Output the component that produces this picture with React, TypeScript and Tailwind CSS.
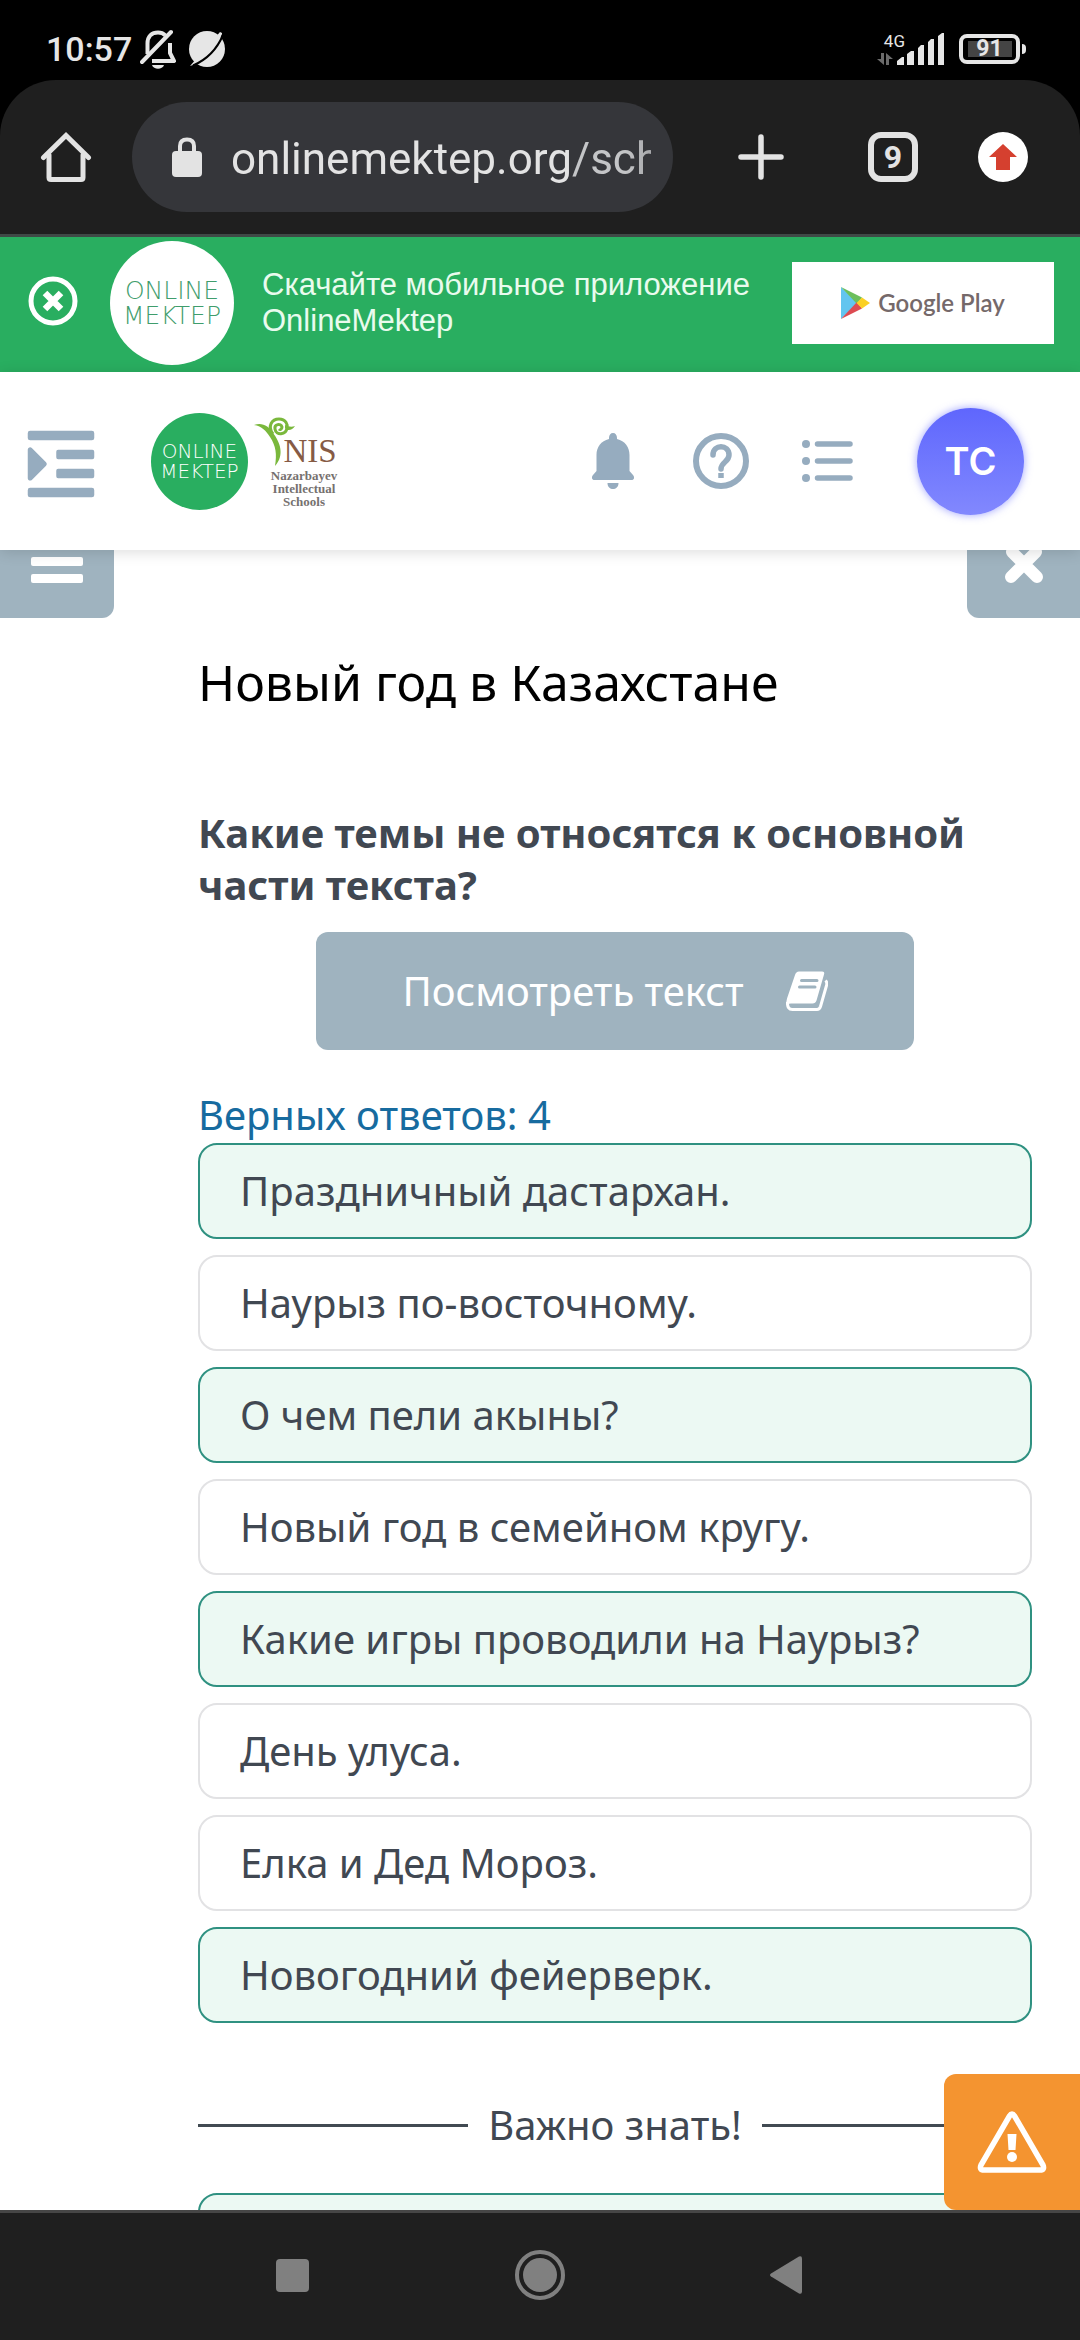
import React from "react";
import { FaIndent } from "react-icons/fa";

const answers = [
  { text: "Праздничный дастархан.", correct: true },
  { text: "Наурыз по-восточному.", correct: false },
  { text: "О чем пели акыны?", correct: true },
  { text: "Новый год в семейном кругу.", correct: false },
  { text: "Какие игры проводили на Наурыз?", correct: true },
  { text: "День улуса.", correct: false },
  { text: "Елка и Дед Мороз.", correct: false },
  { text: "Новогодний фейерверк.", correct: true },
];

function StatusBar() {
  return (
    <div className="flex h-20 shrink-0 items-center justify-between bg-black pl-[46px] pr-[54px] pt-[18px] font-['Roboto'] text-[#e6e6e6]">
      <div className="flex items-center">
        <span className="text-[34px] font-medium leading-10">10:57</span>
        <svg className="ml-2 h-10 w-9" viewBox="0 0 36 40" fill="none" stroke="currentColor" strokeWidth="4">
          <path d="M7.500 25V14.500C7.500 7 12 3.500 18 3.500c3 0 5.500 1 7.300 2.800M30 14v10l4 8H12" strokeLinejoin="round" />
          <path d="M2 33 31 3" strokeLinecap="round" />
          <path d="M12 36h12c-1.500 5-10.500 5-12 0Z" fill="currentColor" stroke="none" />
        </svg>
        <svg className="ml-3 h-[38px] w-[38px]" viewBox="0 0 38 38">
          <circle cx="19" cy="19" r="18" fill="currentColor" />
          <path d="M34 3 32 2 2 36l3-1C17 30 28 20 34 4Z" fill="currentColor" />
          <path d="M34 4C28 18 17 29 4 34.500" fill="none" stroke="#000" strokeWidth="2" transform="translate(1 1)" />
        </svg>
      </div>
      <div className="flex items-center">
        <div className="flex w-7 flex-col">
          <span className="self-end text-[17px] leading-4">4G</span>
          <svg className="mt-1 h-3 w-4" viewBox="0 0 16 12" fill="#6b6b6b">
            <path d="M4 0h3v12L0 6h4ZM12 12H9V0l7 6h-4Z" />
          </svg>
        </div>
        <svg className="-ml-2 h-8 w-12" viewBox="0 0 48 32" fill="currentColor">
          <path d="M0 32v-4l5-4h2v8ZM10 32V21l4-3h3v14ZM21 32V15l3-3h3v20ZM31 32V9l3-3h3v26ZM41 32V3l4-3h2v32Z" />
        </svg>
        <div className="ml-3.5 flex h-[30px] w-[61px] items-center justify-center rounded-lg border-4 border-current">
          <span className="flex h-4 w-11 items-center justify-center bg-[#444] text-[23px] font-bold">91</span>
        </div>
        <div className="ml-0.5 h-2.5 w-1 rounded-r bg-current" />
      </div>
    </div>
  );
}

function BrowserBar() {
  return (
    <div className="shrink-0 bg-black">
      <div className="flex h-[154px] items-center rounded-t-[56px] bg-[#1f1f1f] pl-10 pr-[52px] text-[#e3e3e3]">
        <button aria-label="Главная страница">
          <svg className="h-[52px] w-[52px]" viewBox="0 0 52 52" fill="none" stroke="currentColor" strokeWidth="5" strokeLinecap="round">
            <path d="M3.500 26.500 26 4.500l22.500 22" strokeLinejoin="miter" />
            <path d="M9 24v22.500q0 2 2 2h30q2 0 2-2V24" />
          </svg>
        </button>
        <div className="ml-10 flex h-[110px] min-w-0 flex-1 items-center rounded-full bg-[#35363a] pl-10 pr-[22px]">
          <svg className="h-10 w-[30px] shrink-0" viewBox="0 0 30 40">
            <path d="M8 16V9q0-6.500 7-6.500T22 9v7" fill="none" stroke="currentColor" strokeWidth="4" />
            <rect y="14" width="30" height="26" rx="4" fill="currentColor" />
          </svg>
          <div className="ml-[29px] min-w-0 flex-1 overflow-hidden whitespace-nowrap pt-1 font-['Roboto'] text-[44px] leading-[60px] [mask-image:linear-gradient(to_right,#000_94%,rgba(0,0,0,0.8))]">
            onlinemektep.org<span className="text-[#c4c5c7]">/sch</span>
          </div>
        </div>
        <button aria-label="Новая вкладка" className="ml-16">
          <svg className="h-12 w-12" viewBox="0 0 48 48" stroke="currentColor" strokeWidth="5.500" strokeLinecap="round">
            <path d="M24 4v40M4 24h40" />
          </svg>
        </button>
        <button className="ml-[83px] flex h-[50px] w-[50px] items-center justify-center rounded-[13px] border-[6px] border-current font-['Roboto'] text-[32px] font-bold leading-8">
          9
        </button>
        <button aria-label="Обновить" className="ml-[60px] flex h-[50px] w-[50px] items-center justify-center rounded-full bg-white">
          <svg className="h-[26px] w-7" viewBox="0 0 28 26" fill="#d5402f">
            <path d="M14 0 28 13H21v13H7V13H0Z" />
          </svg>
        </button>
      </div>
    </div>
  );
}

function Wordmark({ className }: { className: string }) {
  return (
    <div className={`flex shrink-0 flex-col items-center justify-center rounded-full font-['DejaVu_Sans'] font-extralight ${className}`}>
      <span>ONLINE</span>
      <span>MEKTEP</span>
    </div>
  );
}

function AppBanner() {
  return (
    <div className="flex h-[138px] shrink-0 items-center border-t-[3px] border-[#3f4946] bg-[#29ae60] pb-[3px] pl-7 pr-[26px] font-['Liberation_Sans']">
      <button aria-label="Закрыть" className="-mt-1">
        <svg className="h-[50px] w-[50px]" viewBox="0 0 50 50" fill="none" stroke="#fff">
          <circle cx="25" cy="25" r="22" strokeWidth="5" />
          <path d="m17 17 16 16M33 17 17 33" strokeWidth="6.500" />
        </svg>
      </button>
      <Wordmark className="ml-8 h-[124px] w-[124px] bg-white text-[25px] leading-[25px] text-[#3f9d6c]" />
      <p className="ml-7 min-w-0 flex-1 text-[31px] leading-9 text-[#e9fbee]">
        Скачайте мобильное приложение OnlineMektep
      </p>
      <a href="#play" className="flex h-[82px] w-[262px] shrink-0 items-center justify-center gap-2 bg-white font-['Lato'] text-[24px] font-semibold text-[#75696a]">
        <svg className="h-8 w-[29px]" viewBox="0 0 29 32">
          <path d="M0 0v32l17-16Z" fill="#62c5ef" />
          <path d="M0 0 21 10.500 16 17Z" fill="#6cbf5c" />
          <path d="M0 32 21 21.500 16 15Z" fill="#dd4b52" />
          <path d="m21 10.500 8 5.500-8 5.500L15.500 16Z" fill="#fbd023" />
        </svg>
        Google Play
      </a>
    </div>
  );
}

function NisLogo() {
  return (
    <div className="relative h-24 w-[84px] font-['Liberation_Serif']">
      <svg className="absolute left-0 top-1 h-[50px] w-[42px]" viewBox="0 0 42 50" fill="none" stroke="#7ab83c">
        <path d="M0 8C8 5 15 9 19 16c7 9 12 22 2 33 2-12 1-20-5-29C12 14 8 9 0 8Z" fill="#7ab83c" stroke="none" />
        <path d="M19 17C13 9 18 2 25 2c7 0 9 6 8 9-1 7-11 8-12 1-1-5 6-6 7-2 0 2-2 3-3 2" strokeWidth="3" />
        <path d="M31 8c4 2 7 2 10 1-3 5-8 5-10 2Z" fill="#7ab83c" stroke="none" />
      </svg>
      <div className="flex flex-col items-center pl-4 pt-5 text-[#76716f]">
        <span className="pl-3 text-[33px] leading-9 text-[#865b45]">NIS</span>
        <span className="text-center text-[13px] font-bold leading-[13px]">
          Nazarbayev
          <br />
          Intellectual
          <br />
          Schools
        </span>
      </div>
    </div>
  );
}

function SiteHeader() {
  return (
    <header className="relative z-10 flex h-[178px] shrink-0 items-center bg-white pl-[27px] pr-14 text-[#96acbf] shadow-[0_2px_14px_rgba(0,0,0,0.14)]">
      <button aria-label="Меню" className="mt-1.5">
        <FaIndent className="h-[76px] w-[68px]" />
      </button>
      <a href="#home" className="ml-14 flex items-center gap-[6px]">
        <Wordmark className="h-[97px] w-[97px] bg-[#29ae60] text-[20px] leading-[20px] text-white" />
        <NisLogo />
      </a>
      <div className="ml-auto flex items-center">
        <button aria-label="Уведомления">
          <svg className="h-14 w-[42px]" viewBox="0 0 42 56" fill="currentColor">
            <path d="M21 0c-2.500 0-4 2-4 5v1C9 8 4.500 14 4.500 22v16L1 42c-2 2.500-1 5 1.500 5h37c2.500 0 3.500-2.500 1.500-5l-3.500-4V22C37.500 14 33 8 25 6V5c0-3-1.500-5-4-5ZM15.500 50h11c0 8-11 8-11 0Z" />
          </svg>
        </button>
        <button aria-label="Помощь" className="ml-[59px]">
          <svg className="h-14 w-14" viewBox="0 0 56 56" fill="none" stroke="currentColor">
            <circle cx="28" cy="28" r="25" strokeWidth="6" />
            <path d="M20 22c0-11 16-11 16 0 0 7-8 7-8 14" strokeWidth="5.500" strokeLinecap="round" />
            <path d="M28 40v5" strokeWidth="5.500" />
          </svg>
        </button>
        <button aria-label="Список" className="ml-[53px]">
          <svg className="h-[42px] w-[51px]" viewBox="0 0 51 42" fill="currentColor" stroke="currentColor">
            <g stroke="none">
              <circle cx="4" cy="4" r="4" />
              <circle cx="4" cy="21" r="4" />
              <circle cx="4" cy="38" r="4" />
            </g>
            <path d="M15.500 4h32.500M15.500 21h32.500M15.500 38h32.500" strokeWidth="5.500" strokeLinecap="round" />
          </svg>
        </button>
        <button className="ml-16 h-[107px] w-[107px] rounded-full bg-linear-to-b from-[#5f66fd] to-[#8288fe] font-['Inter'] text-[38px] font-semibold text-white shadow-[0_0_8px_rgba(95,102,253,0.6)]">
          TC
        </button>
      </div>
    </header>
  );
}

function Lesson() {
  return (
    <main className="relative min-h-0 flex-1 overflow-hidden bg-white">
      <div className="flex h-[68px] justify-between">
        <button aria-label="Содержание" className="flex w-[114px] justify-center rounded-br-xl bg-[#9fb3bf]">
          <svg className="h-[34px] w-[52px]" viewBox="0 0 52 34" fill="#fff">
            <rect y="7" width="52" height="9" rx="2" />
            <rect y="24" width="52" height="9" rx="2" />
          </svg>
        </button>
        <button aria-label="Закрыть урок" className="flex w-[113px] justify-center rounded-bl-xl bg-[#9fb3bf]">
          <svg className="h-[34px] w-10" viewBox="0 0 40 34" stroke="#fff" strokeWidth="12" strokeLinecap="round">
            <path d="M8 2 33 27M32 2 7 27" />
          </svg>
        </button>
      </div>
      <div className="pl-[198px] pr-12 font-['Noto_Sans'] text-[40px] leading-[52px] text-[#414852]">
        <h1 className="mt-8 text-[50px] leading-[64px] text-black">Новый год в Казахстане</h1>
        <h2 className="mt-[93px] font-bold">Какие темы не относятся к основной части текста?</h2>
        <button className="mx-auto mt-[21px] flex h-[118px] w-[598px] items-center justify-center gap-[42px] rounded-xl bg-[#9fb3bf] text-white">
          Посмотреть текст
          <svg className="h-10 w-[42px]" viewBox="0 0 42 40">
            <path d="M13 .5h23q3 0 2 3l-7.500 26q-1 3-4 3H5q-4 0-4.500 2-.5-4 .5-7L9 4q1-3.500 4-3.500Z" fill="#fff" />
            <path d="M1.500 31q-.5 7.500 5 7.500H31q2.500 0 3.500-3l6-21q1-3-1-5" fill="none" stroke="#fff" strokeWidth="3" />
            <path d="M15.500 9.500h15.500M13.500 16h15.500" stroke="#9fb3bf" strokeWidth="3" strokeLinecap="round" />
          </svg>
        </button>
        <p className="mt-[39px] text-[#176b9f]">Верных ответов: 4</p>
        <ul className="mt-0.5 flex flex-col gap-4">
          {answers.map((a) => (
            <li key={a.text}>
              <button
                className={`h-24 w-full rounded-[19px] border-2 px-10 text-left ${
                  a.correct ? "border-[#2f9181] bg-[#ecf9f3]" : "border-[#e2e2e4] bg-white"
                }`}
              >
                {a.text}
              </button>
            </li>
          ))}
        </ul>
        <div className="mt-[76px] flex items-center gap-5">
          <span className="h-[3px] flex-1 bg-[#414a52]" />
          <span>Важно знать!</span>
          <span className="h-[3px] flex-1 bg-[#414a52]" />
        </div>
        <div className="mt-[42px] h-24 rounded-[19px] border-2 border-[#2f9181] bg-[#ecf9f3]" />
      </div>
      <button aria-label="Сообщить об ошибке" className="absolute bottom-0 right-0 flex h-[136px] w-[136px] items-center justify-center rounded-l-xl bg-[#f49430]">
        <svg className="h-[62px] w-[70px]" viewBox="0 0 70 62" fill="none" stroke="#fff">
          <path d="M32.500 5q2.500-4 5 0L66 54q2 5-3 5H7q-5 0-3-5Z" strokeWidth="5.500" />
          <path d="M30.500 23h9l-1 16h-7Z" fill="#fff" stroke="none" />
          <circle cx="35" cy="46" r="5" fill="#fff" stroke="none" />
        </svg>
      </button>
    </main>
  );
}

function SystemNav() {
  return (
    <nav className="grid h-[130px] shrink-0 grid-cols-3 items-center border-t-[3px] border-[#464646] bg-[#1f1f1f] px-[168px] pb-[3px]">
      <button aria-label="Недавние" className="mx-auto h-[33px] w-[33px] rounded-sm bg-[#808080]" />
      <button aria-label="Домой" className="mx-auto flex h-[50px] w-[50px] items-center justify-center rounded-full border-4 border-[#808080]">
        <span className="h-[34px] w-[34px] rounded-full bg-[#808080]" />
      </button>
      <button aria-label="Назад" className="mx-auto pr-1">
        <svg className="h-[38px] w-8" viewBox="0 0 32 38" fill="#808080">
          <path d="M1 17.500 29 .5q3-1 3 2v33q0 3-3 2L1 20.500q-2-1.500 0-3Z" />
        </svg>
      </button>
    </nav>
  );
}

export default function App() {
  return (
    <div className="flex h-screen flex-col overflow-hidden bg-white">
      <StatusBar />
      <BrowserBar />
      <AppBanner />
      <SiteHeader />
      <Lesson />
      <SystemNav />
    </div>
  );
}
